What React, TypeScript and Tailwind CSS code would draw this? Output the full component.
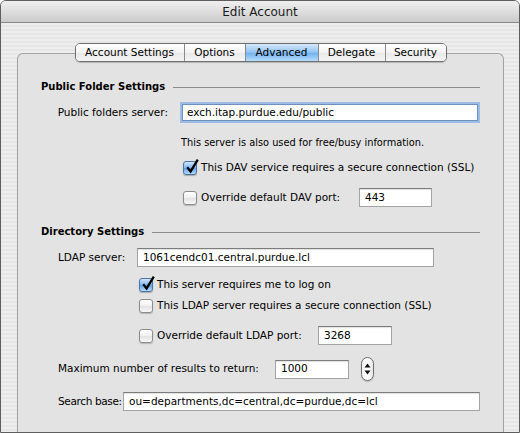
import React from "react";

function Check({ checked }: { checked?: boolean }) {
  return (
    <span
      className={
        checked
          ? "relative inline-block h-[14px] w-[14px] shrink-0 rounded-[3px] border border-[#4a74a8] bg-[linear-gradient(#d2e6fc,#7db4ef_50%,#5c9fe8_51%,#b5dcfc)] shadow-[0_1px_1px_rgba(0,0,0,0.25)]"
          : "relative inline-block h-[14px] w-[14px] shrink-0 rounded-[3px] border border-[#8c8c8c] bg-[linear-gradient(#ffffff,#f0f0f0_50%,#e2e2e2_51%,#f8f8f8)] shadow-[0_1px_1px_rgba(0,0,0,0.2)]"
      }
    >
      {checked && (
        <svg className="absolute -top-[4px] left-[1px] h-[16px] w-[15px]" viewBox="0 0 15 16">
          <path d="M2.2 9.2 L5.6 13.4 L12.8 1.6" fill="none" stroke="#000" strokeWidth="2.3" strokeLinejoin="miter" />
        </svg>
      )}
    </span>
  );
}

function Field({ value, className }: { value: string; className: string }) {
  return (
    <div
      className={`flex h-[19px] shrink-0 items-center whitespace-nowrap border border-[#a4a4a4] border-t-[#7c7c7c] bg-white pl-[5px] text-[10.5px] shadow-[inset_0_1px_1px_rgba(0,0,0,0.12)] ${className}`}
    >
      {value}
    </div>
  );
}

function Heading({ title }: { title: string }) {
  return (
    <div className="flex h-[14px] items-center gap-[8px]">
      <span className="whitespace-nowrap text-[10px] font-bold">{title}</span>
      <span className="mt-[3px] h-px flex-1 bg-[#8c8c8c]" />
    </div>
  );
}

const tabs = ["Account Settings", "Options", "Advanced", "Delegate", "Security"];
const tabWidths = ["w-[108px]", "w-[61px]", "w-[73px]", "w-[67px]", "w-[61px]"];

export default function App() {
  return (
    <div className="flex h-[433px] w-[520px] flex-col overflow-hidden rounded-t-[6px] border border-[#5e5e5e] font-['DejaVu_Sans',sans-serif] text-[10.5px] text-black">
      {/* title bar */}
      <div className="flex h-[22px] shrink-0 items-center justify-center border-b border-[#8a8a8a] bg-[linear-gradient(#efefef,#dedede_50%,#cbcbcb)] text-[12px] text-[#1a1a1a]">
        Edit Account
      </div>

      {/* body */}
      <div className="flex flex-1 flex-col bg-[image:repeating-linear-gradient(to_bottom,#eeeeee_0px,#eeeeee_2px,#e6e6e6_2px,#e6e6e6_4px)] pl-[16px] pr-[15px]">
        {/* tabs */}
        <div className="relative z-10 mt-[20px] flex h-[19px] justify-center">
          <div className="flex overflow-hidden rounded-[5px] border border-[#6f6f6f] shadow-[0_1px_1px_rgba(0,0,0,0.2)]">
            {tabs.map((t, i) => (
              <div
                key={t}
                className={`flex items-center justify-center ${tabWidths[i]} ${i > 0 ? "border-l border-[#8a8a8a]" : ""} ${
                  t === "Advanced"
                    ? "bg-[linear-gradient(#d6e9fc,#8fc2f3_50%,#6cadee_51%,#b6defd)]"
                    : "bg-[linear-gradient(#ffffff,#f3f3f3_50%,#e8e8e8_51%,#f5f5f5)]"
                }`}
              >
                {t}
              </div>
            ))}
          </div>
        </div>

        {/* panel */}
        <div className="-mt-[9px] flex flex-1 flex-col rounded-t-[6px] border border-b-0 border-[#a2a2a2] bg-[#e3e3e3] px-[23px] pt-[25px] whitespace-nowrap">
          <Heading title="Public Folder Settings" />

          <div className="mt-[9px] flex h-[21px] items-center">
            <span className="w-[127px] shrink-0 text-right">Public folders server:</span>
            <div className="ml-[14px] mr-[2px] flex h-[17px] flex-1 items-center border border-[#6f8fbf] bg-white pl-[4px] shadow-[0_0_0_2px_#9dbde6]">
              exch.itap.purdue.edu/public
            </div>
          </div>

          <div className="mt-[13px] flex h-[14px] items-center pl-[140px] text-[9.8px]">
            This server is also used for free/busy information.
          </div>

          <div className="mt-[10px] flex h-[16px] items-center gap-[4px] pl-[142px]">
            <Check checked />
            <span>This DAV service requires a secure connection (SSL)</span>
          </div>

          <div className="mt-[12px] flex h-[19px] items-center pl-[142px]">
            <Check />
            <span className="ml-[4px] w-[158px] shrink-0">Override default DAV port:</span>
            <Field value="443" className="w-[73px]" />
          </div>

          <div className="mt-[17px]">
            <Heading title="Directory Settings" />
          </div>

          <div className="mt-[10px] flex h-[19px] items-center pl-[17px]">
            <span className="w-[79px] shrink-0">LDAP server:</span>
            <Field value="1061cendc01.central.purdue.lcl" className="w-[297px]" />
          </div>

          <div className="mt-[10px] flex h-[16px] items-center gap-[4px] pl-[98px]">
            <Check checked />
            <span>This server requires me to log on</span>
          </div>

          <div className="mt-[5px] flex h-[16px] items-center gap-[4px] pl-[98px]">
            <Check />
            <span>This LDAP server requires a secure connection (SSL)</span>
          </div>

          <div className="mt-[12px] flex h-[19px] items-center pl-[98px]">
            <Check />
            <span className="ml-[4px] w-[161px] shrink-0">Override default LDAP port:</span>
            <Field value="3268" className="w-[74px]" />
          </div>

          <div className="mt-[12px] flex h-[24px] items-center pl-[17px]">
            <span className="w-[217px] shrink-0">Maximum number of results to return:</span>
            <Field value="1000" className="w-[74px]" />
            <div className="ml-[12px] flex h-[24px] w-[13px] shrink-0 flex-col items-center justify-between rounded-full border border-[#6f6f6f] bg-[linear-gradient(90deg,#f2f2f2,#ffffff_50%,#e6e6e6)] py-[5px] shadow-[0_1px_1px_rgba(0,0,0,0.2)]">
              <svg width="7" height="5" viewBox="0 0 7 5">
                <path d="M3.5 0.5 L6.5 4.5 L0.5 4.5 Z" fill="#111" />
              </svg>
              <svg width="7" height="5" viewBox="0 0 7 5">
                <path d="M0.5 0.5 L6.5 0.5 L3.5 4.5 Z" fill="#111" />
              </svg>
            </div>
          </div>

          <div className="mt-[11px] flex h-[19px] items-center pl-[17px]">
            <span className="w-[65px] shrink-0 tracking-[-0.35px]">Search base:</span>
            <Field value="ou=departments,dc=central,dc=purdue,dc=lcl" className="flex-1 shrink" />
          </div>
        </div>
      </div>
    </div>
  );
}
